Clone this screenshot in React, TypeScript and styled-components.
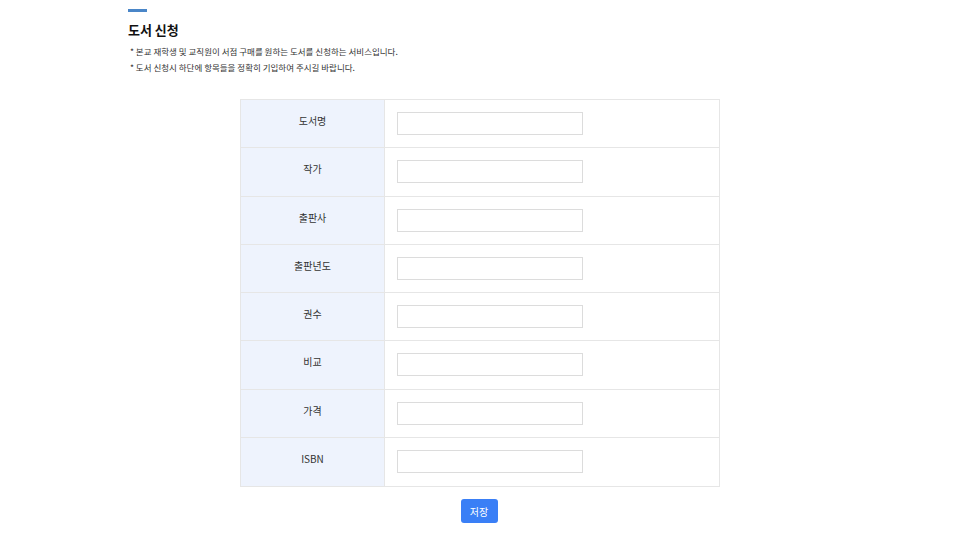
import React from "react";
import styled, { createGlobalStyle } from "styled-components";

const Global = createGlobalStyle`
  html, body { margin: 0; padding: 0; background: #fff; }
  body { font-family: "Noto Sans CJK KR", "Noto Sans", sans-serif; color: #222; }
`;

const Page = styled.div`
  width: 704px;
  margin: 0 auto;
  padding-top: 9px;
`;

const Accent = styled.div`
  width: 19px;
  height: 3px;
  background: #4a86c8;
`;

const Title = styled.h1`
  margin: 8px 0 0;
  font-size: 13px;
  font-weight: 700;
  line-height: 20px;
  color: #111;
`;

const Notes = styled.ul`
  list-style: none;
  margin: 3px 0 0;
  padding: 0 0 0 2px;
`;

const Note = styled.li`
  font-size: 8.5px;
  line-height: 16px;
  color: #333;
`;

const Table = styled.div`
  width: 480px;
  box-sizing: border-box;
  margin: 24px auto 0;
  border: 1px solid #e6e6e6;
  display: grid;
  grid-template-columns: 144px 1fr;
  grid-auto-rows: 48.25px;
`;

const Label = styled.div<{ $last?: boolean }>`
  background: #eef3fd;
  border-right: 1px solid #e6e6e6;
  border-bottom: ${(p) => (p.$last ? "none" : "1px solid #e6e6e6")};
  display: flex;
  align-items: center;
  justify-content: center;
  font-size: 10px;
  color: #333;
  padding-bottom: 6px;
`;

const Cell = styled.div<{ $last?: boolean }>`
  border-bottom: ${(p) => (p.$last ? "none" : "1px solid #e6e6e6")};
  display: flex;
  align-items: center;
  padding: 0 0 0 12px;
`;

const Input = styled.input`
  width: 186px;
  height: 23px;
  box-sizing: border-box;
  border: 1px solid #dcdcdc;
  background: #fff;
  outline: none;
  font-size: 10px;
`;

const Actions = styled.div`
  display: flex;
  justify-content: center;
  margin-top: 12px;
`;

const SaveButton = styled.button`
  width: 37px;
  height: 24px;
  margin-left: -2px;
  border: none;
  border-radius: 3px;
  background: #3a7ff6;
  color: #fff;
  font-family: "Noto Sans CJK KR", sans-serif;
  font-size: 10px;
  padding: 0;
  cursor: pointer;
`;

const fields = ["도서명", "작가", "출판사", "출판년도", "권수", "비교", "가격", "ISBN"];

export default function App() {
  return (
    <>
      <Global />
      <Page>
        <Accent />
        <Title>도서 신청</Title>
        <Notes>
          <Note>* 본교 재학생 및 교직원이 서점 구매를 원하는 도서를 신청하는 서비스입니다.</Note>
          <Note>* 도서 신청시 하단에 항목들을 정확히 기입하여 주시길 바랍니다.</Note>
        </Notes>
        <Table>
          {fields.map((f, i) => {
            const last = i === fields.length - 1;
            return (
              <React.Fragment key={f}>
                <Label $last={last}>{f}</Label>
                <Cell $last={last}>
                  <Input type="text" />
                </Cell>
              </React.Fragment>
            );
          })}
        </Table>
        <Actions>
          <SaveButton>저장</SaveButton>
        </Actions>
      </Page>
    </>
  );
}
